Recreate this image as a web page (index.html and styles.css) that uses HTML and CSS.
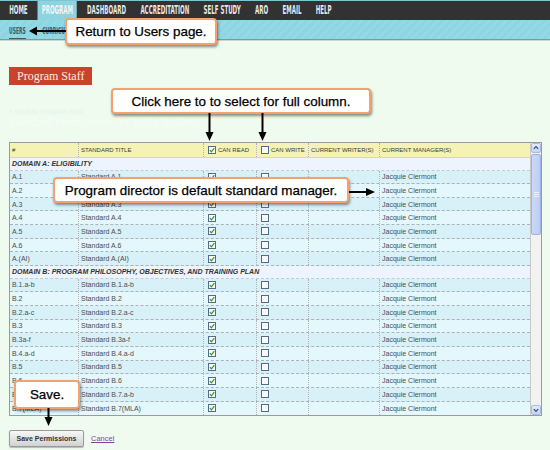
FILE: index.html
```html
<!DOCTYPE html>
<html>
<head>
<meta charset="utf-8">
<title>Standard Permissions</title>
<link rel="stylesheet" href="styles.css">
</head>
<body>
<svg class="defs" aria-hidden="true">
  <symbol id="cb-on" viewBox="0 0 8 8">
    <rect x=".5" y=".5" width="7" height="7" fill="#fafafa" stroke="#546b8c"/>
    <path d="M1.8 4.1 L3.4 5.8 L6.3 2.1" fill="none" stroke="#2e9a2e" stroke-width="1.2"/>
  </symbol>
  <symbol id="cb-off" viewBox="0 0 8 8">
    <rect x=".5" y=".5" width="7" height="7" fill="#fafafa" stroke="#546b8c"/>
  </symbol>
</svg>

<header>
  <nav class="topbar">
    <ul class="menu">
      <li>HOME</li>
      <li class="active">PROGRAM</li>
      <li>DASHBOARD</li>
      <li>ACCREDITATION</li>
      <li>SELF STUDY</li>
      <li>ARO</li>
      <li>EMAIL</li>
      <li>HELP</li>
    </ul>
  </nav>
  <div class="subbar">
    <ul class="submenu">
      <li class="cur">USERS</li>
      <li>CURRICULUM</li>
    </ul>
  </div>
</header>

<main class="page">
  <button class="staff">Program Staff</button>
  <p class="crumb">« Back to Program Staff</p>
  <h2 class="title">Standard Permissions for Kelly Sollano</h2>

  <div class="gridbox">
    <div class="grid">
      <div class="row head">
        <span>#</span>
        <span>Standard Title</span>
        <span><svg class="cb"><use href="#cb-on"/></svg>Can Read</span>
        <span><svg class="cb"><use href="#cb-off"/></svg>Can Write</span>
        <span>Current Writer(s)</span>
        <span>Current Manager(s)</span>
      </div>
      <div class="domain">DOMAIN A: ELIGIBILITY</div>
      <div class="row dark"><span>A.1</span><span>Standard A.1</span><span><svg class="cb"><use href="#cb-on"/></svg></span><span><svg class="cb"><use href="#cb-off"/></svg></span><span></span><span>Jacquie Clermont</span></div>
      <div class="row"><span>A.2</span><span>Standard A.2</span><span><svg class="cb"><use href="#cb-on"/></svg></span><span><svg class="cb"><use href="#cb-off"/></svg></span><span></span><span>Jacquie Clermont</span></div>
      <div class="row dark"><span>A.3</span><span>Standard A.3</span><span><svg class="cb"><use href="#cb-on"/></svg></span><span><svg class="cb"><use href="#cb-off"/></svg></span><span></span><span>Jacquie Clermont</span></div>
      <div class="row"><span>A.4</span><span>Standard A.4</span><span><svg class="cb"><use href="#cb-on"/></svg></span><span><svg class="cb"><use href="#cb-off"/></svg></span><span></span><span>Jacquie Clermont</span></div>
      <div class="row dark"><span>A.5</span><span>Standard A.5</span><span><svg class="cb"><use href="#cb-on"/></svg></span><span><svg class="cb"><use href="#cb-off"/></svg></span><span></span><span>Jacquie Clermont</span></div>
      <div class="row"><span>A.6</span><span>Standard A.6</span><span><svg class="cb"><use href="#cb-on"/></svg></span><span><svg class="cb"><use href="#cb-off"/></svg></span><span></span><span>Jacquie Clermont</span></div>
      <div class="row dark"><span>A.(AI)</span><span>Standard A.(AI)</span><span><svg class="cb"><use href="#cb-on"/></svg></span><span><svg class="cb"><use href="#cb-off"/></svg></span><span></span><span>Jacquie Clermont</span></div>
      <div class="domain">DOMAIN B: PROGRAM PHILOSOPHY, OBJECTIVES, AND TRAINING PLAN</div>
      <div class="row dark"><span>B.1.a-b</span><span>Standard B.1.a-b</span><span><svg class="cb"><use href="#cb-on"/></svg></span><span><svg class="cb"><use href="#cb-off"/></svg></span><span></span><span>Jacquie Clermont</span></div>
      <div class="row"><span>B.2</span><span>Standard B.2</span><span><svg class="cb"><use href="#cb-on"/></svg></span><span><svg class="cb"><use href="#cb-off"/></svg></span><span></span><span>Jacquie Clermont</span></div>
      <div class="row dark"><span>B.2.a-c</span><span>Standard B.2.a-c</span><span><svg class="cb"><use href="#cb-on"/></svg></span><span><svg class="cb"><use href="#cb-off"/></svg></span><span></span><span>Jacquie Clermont</span></div>
      <div class="row"><span>B.3</span><span>Standard B.3</span><span><svg class="cb"><use href="#cb-on"/></svg></span><span><svg class="cb"><use href="#cb-off"/></svg></span><span></span><span>Jacquie Clermont</span></div>
      <div class="row dark"><span>B.3a-f</span><span>Standard B.3a-f</span><span><svg class="cb"><use href="#cb-on"/></svg></span><span><svg class="cb"><use href="#cb-off"/></svg></span><span></span><span>Jacquie Clermont</span></div>
      <div class="row"><span>B.4.a-d</span><span>Standard B.4.a-d</span><span><svg class="cb"><use href="#cb-on"/></svg></span><span><svg class="cb"><use href="#cb-off"/></svg></span><span></span><span>Jacquie Clermont</span></div>
      <div class="row dark"><span>B.5</span><span>Standard B.5</span><span><svg class="cb"><use href="#cb-on"/></svg></span><span><svg class="cb"><use href="#cb-off"/></svg></span><span></span><span>Jacquie Clermont</span></div>
      <div class="row"><span>B.6</span><span>Standard B.6</span><span><svg class="cb"><use href="#cb-on"/></svg></span><span><svg class="cb"><use href="#cb-off"/></svg></span><span></span><span>Jacquie Clermont</span></div>
      <div class="row dark"><span>B.7.a-b</span><span>Standard B.7.a-b</span><span><svg class="cb"><use href="#cb-on"/></svg></span><span><svg class="cb"><use href="#cb-off"/></svg></span><span></span><span>Jacquie Clermont</span></div>
      <div class="row last"><span>B.7(MLA)</span><span>Standard B.7(MLA)</span><span><svg class="cb"><use href="#cb-on"/></svg></span><span><svg class="cb"><use href="#cb-off"/></svg></span><span></span><span>Jacquie Clermont</span></div>
    </div>
    <div class="scroll">
      <div class="sbtn">
        <svg viewBox="0 0 9 9"><path d="M2 5.5 L4.5 3 L7 5.5" fill="none" stroke="#2d4f86" stroke-width="1.4"/></svg>
      </div>
      <div class="thumb"><span></span><span></span><span></span></div>
      <div class="track"></div>
      <div class="sbtn">
        <svg viewBox="0 0 9 9"><path d="M2 3.5 L4.5 6 L7 3.5" fill="none" stroke="#2d4f86" stroke-width="1.4"/></svg>
      </div>
    </div>
  </div>

  <div class="actions">
    <button class="save">Save Permissions</button>
    <a class="cancel" href="#">Cancel</a>
  </div>
</main>

<div class="callout c1">Return to Users page.</div>
<div class="callout c2">Click here to to select for full column.</div>
<div class="callout c3">Program director is default standard manager.</div>
<div class="callout c4">Save.</div>

<svg class="arrow a-left" viewBox="0 0 38 12"><line x1="8" y1="6" x2="38" y2="6" stroke="#000" stroke-width="2"/><polygon points="1,6 9,1.5 9,10.5" fill="#000"/></svg>
<svg class="arrow a-down1" viewBox="0 0 9 29"><line x1="4.5" y1="0" x2="4.5" y2="20" stroke="#000" stroke-width="2"/><polygon points="0.5,19 8.5,19 4.5,28" fill="#000"/></svg>
<svg class="arrow a-down2" viewBox="0 0 9 29"><line x1="4.5" y1="0" x2="4.5" y2="20" stroke="#000" stroke-width="2"/><polygon points="0.5,19 8.5,19 4.5,28" fill="#000"/></svg>
<svg class="arrow a-right" viewBox="0 0 27 10"><line x1="0" y1="5" x2="18" y2="5" stroke="#000" stroke-width="2"/><polygon points="17,1 17,9 26,5" fill="#000"/></svg>
<svg class="arrow a-down3" viewBox="0 0 9 19"><line x1="4.5" y1="0" x2="4.5" y2="10" stroke="#000" stroke-width="2"/><polygon points="0.5,9 8.5,9 4.5,18" fill="#000"/></svg>
</body>
</html>
```

FILE: styles.css
```css
* { box-sizing: border-box; margin: 0; padding: 0; }

html, body { width: 550px; height: 450px; overflow: hidden; }

body {
  position: relative;
  background: #eefbee;
  font-family: "Liberation Sans", Arial, sans-serif;
  color: #333;
}

.defs { position: absolute; width: 0; height: 0; overflow: hidden; }

/* ---------- top navigation ---------- */
.topbar {
  height: 20px;
  background: #323232;
  border-top: 1px solid #7cc5d3;
}

.menu, .submenu {
  list-style: none;
  display: flex;
  width: max-content;
  transform: scaleX(.53);
  transform-origin: 0 0;
  margin-left: 2px;
}

.menu li {
  padding: 0 13.5px;
  font: bold 11.5px/19px "DejaVu Sans Condensed", "DejaVu Sans", sans-serif;
  font-stretch: condensed;
  color: #e6e6e6;
}

.menu li.active {
  background: #8fd3df;
  color: #eef6f8;
  padding: 0 7.5px;
  margin: 0 5.5px;
}

.subbar {
  height: 20px;
  background: repeating-linear-gradient(135deg, #8fd4e1 0 3px, #93d8e5 3px 6px);
  border-bottom: 1px solid #5fa5b4;
  box-shadow: 0 1px 0 #c9d8c9;
}

.submenu { margin-left: 9px; }

.submenu li {
  margin-right: 31px;
  padding-top: 3px;
  font: bold 9.5px/15px "DejaVu Sans Condensed", "DejaVu Sans", sans-serif;
  font-stretch: condensed;
  color: #44585d;
}

.submenu li.cur { border-bottom: 1px solid #4d5a5d; }

/* ---------- page ---------- */
.page { padding-left: 9px; }

.staff {
  display: block;
  margin-top: 27px;
  height: 18px;
  padding: 0 8px;
  background: #c8432a;
  border: none;
  color: #f8ebe4;
  font: 12px "Liberation Serif", serif;
}

.crumb {
  margin-top: 22px;
  font-size: 7px;
  line-height: 9px;
  color: #e6f6e6;
}

.title {
  font: normal 12px/13px "Liberation Serif", serif;
  color: #f6fdf6;
}

/* ---------- grid ---------- */
.gridbox {
  display: flex;
  width: 533px;
  height: 274px;
  margin-top: 13px;
  border: 1px solid #9b9b9b;
  background: #fff;
  overflow: hidden;
}

.grid { width: 520px; overflow: hidden; }

.row {
  display: grid;
  grid-template-columns: 68px 125px 53px 52px 71px 151px;
  height: 13.66px;
  background: #e4f7fc;
  border-bottom: 1px dashed #a8b4b8;
  font-size: 7px;
  color: #4d4d4d;
}

.row.dark { background: #d8f1f9; }
.row.last { border-bottom: none; }

.row > span {
  display: flex;
  align-items: center;
  padding-left: 2px;
  border-left: 1px dotted #b3b3b3;
  white-space: nowrap;
  overflow: hidden;
}

.row > span:first-child { border-left: none; padding-left: 2px; }

.row.head {
  height: 15px;
  background: #f4f2b5;
  border-bottom: 1px solid #dcd9a4;
  font-size: 6px;
  color: #3a3a3a;
  text-transform: uppercase;
}

.cb { width: 8px; height: 8px; margin-left: 2px; flex: none; }
.head .cb { margin-right: 2px; }

.domain {
  display: flex;
  align-items: center;
  height: 12.5px;
  padding-left: 2px;
  background: #edf4fd;
  border-bottom: 1px dashed #c3cad6;
  font: italic bold 7px "Liberation Sans", Arial, sans-serif;
  color: #333;
}

/* fake scrollbar */
.scroll {
  width: 11px;
  display: flex;
  flex-direction: column;
  background: #f2f2f0;
  border-left: 1px solid #c9c9c9;
}

.sbtn {
  height: 10px;
  flex: none;
  display: flex;
  align-items: center;
  justify-content: center;
  background: linear-gradient(#e3ebfb, #c5d4f5);
  border: 1px solid #a9bbe0;
  border-radius: 2px;
}

.sbtn svg { width: 8px; height: 8px; }

.thumb {
  height: 81px;
  flex: none;
  margin-top: 1px;
  display: flex;
  flex-direction: column;
  justify-content: center;
  align-items: center;
  gap: 1px;
  background: linear-gradient(90deg, #cbd8f8, #bccdf4);
  border: 1px solid #9fb2df;
  border-radius: 2px;
}

.thumb span { width: 5px; height: 1px; background: #eef2fc; }

.track { flex: 1; }

/* ---------- actions ---------- */
.actions {
  display: flex;
  align-items: center;
  gap: 7px;
  margin-top: 14px;
}

.save {
  height: 17px;
  width: 75px;
  background: linear-gradient(#f7f7f7, #d2d2d2);
  border: 1px solid #9a9a9a;
  border-radius: 2px;
  box-shadow: 0 1px 1px rgba(0,0,0,.25);
  font: bold 7px "Liberation Sans", Arial, sans-serif;
  color: #333;
}

.cancel {
  font-size: 7.5px;
  color: #8a3da3;
  text-decoration: underline;
}

/* ---------- overlays: callouts and arrows ---------- */
.callout {
  position: absolute;
  display: flex;
  align-items: center;
  justify-content: center;
  background: #fff;
  border: 2px solid #f6a06c;
  border-radius: 4px;
  box-shadow: 1px 2px 3px rgba(0,0,0,.45);
  font: 13.4px "Liberation Sans", Arial, sans-serif;
  -webkit-text-stroke: 0.25px #000;
  color: #000;
  white-space: nowrap;
}

.c1 { left: 65px; top: 18px; width: 152px; height: 27px; }
.c2 { left: 111px; top: 88px; width: 260px; height: 26px; }
.c3 { left: 53px; top: 177px; width: 296px; height: 26px; }
.c4 { left: 14px; top: 380px; width: 66px; height: 29px; }

.arrow { position: absolute; overflow: visible; }
.a-left { left: 28px; top: 25px; width: 38px; height: 12px; }
.a-down1 { left: 205px; top: 113px; width: 9px; height: 29px; }
.a-down2 { left: 258px; top: 113px; width: 9px; height: 29px; }
.a-right { left: 349px; top: 187px; width: 27px; height: 10px; }
.a-down3 { left: 44px; top: 408px; width: 9px; height: 19px; }
```
